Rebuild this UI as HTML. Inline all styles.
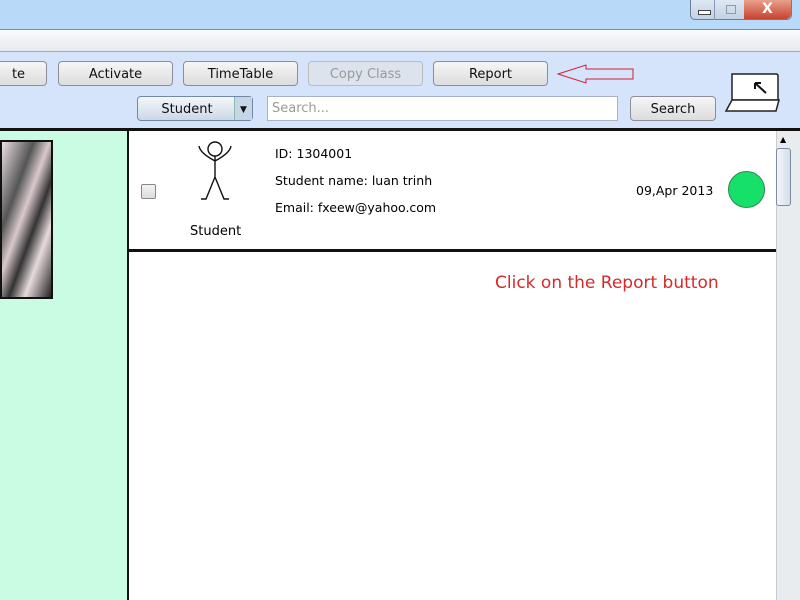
<!DOCTYPE html><html><head><style>
body{margin:0;width:800px;height:600px;overflow:hidden;position:relative;font-family:"Comic Sans MS","DejaVu Sans",sans-serif;background:#fff}
.a{position:absolute}
.btn{position:absolute;height:25px;border:1px solid #8a8f99;border-radius:4px;background:linear-gradient(#f6f6f6,#dcdcdc);font-size:13px;text-align:center;line-height:26px;color:#111;box-sizing:border-box}
</style></head><body>
<div class="a" style="left:0;top:0;width:800px;height:29px;background:#b9d9f9"></div>
<div class="a" style="left:690px;top:0;width:102px;height:20px;border:1px solid #6c7d96;border-top:none;border-radius:0 0 5px 5px;background:linear-gradient(#dfe8f3,#c3d1e3);box-sizing:border-box"></div>
<div class="a" style="left:714px;top:0;width:1px;height:20px;background:#8a9ab0"></div>
<div class="a" style="left:744px;top:0;width:47px;height:19px;background:linear-gradient(#e8a08e,#c7432c);border-radius:0 0 5px 0"></div>
<div class="a" style="left:698px;top:10px;width:11px;height:3px;border:1px solid #444;background:#fff"></div>
<div class="a" style="left:726px;top:5px;width:8px;height:7px;border:1px solid #8a9ab0"></div>
<div class="a" style="left:762px;top:1px;color:#fff;font-size:14px;font-weight:bold;font-family:'DejaVu Sans'">X</div>
<div class="a" style="left:0;top:29px;width:800px;height:23px;background:linear-gradient(#fafbfc,#e6e9ee);border-top:1px solid #7d8ba0;border-bottom:1px solid #a0a8b4;box-sizing:border-box"></div>
<div class="a" style="left:0;top:52px;width:800px;height:76px;background:#d5e3fb"></div>
<div class="btn" style="left:-10px;top:61px;width:57px">te</div>
<div class="btn" style="left:58px;top:61px;width:115px">Activate</div>
<div class="btn" style="left:183px;top:61px;width:115px">TimeTable</div>
<div class="btn" style="left:308px;top:61px;width:115px;color:#999;border-color:#bbb;background:#dde3ec">Copy Class</div>
<div class="btn" style="left:433px;top:61px;width:115px">Report</div>
<svg class="a" style="left:556px;top:63px" width="80" height="22"><path d="M2 11 L30 2 L30 6 L77 6 L77 16 L30 16 L30 20 Z" fill="none" stroke="#d02030" stroke-width="1"/></svg>
<div class="btn" style="left:137px;top:96px;width:116px;height:25px;background:linear-gradient(#f4f7fb,#ccd8e6);border-color:#6f89a6">
<span style="position:absolute;left:0;width:98px">Student</span><span style="position:absolute;right:0;top:0;width:17px;height:23px;border-left:1px solid #8ba;background:#c7d6e6;font-size:9px">▼</span></div>
<div class="a" style="left:267px;top:96px;width:351px;height:25px;background:#fff;border:1px solid #a8b4c4;box-sizing:border-box;font-size:13px;color:#999;line-height:23px;padding-left:4px">Search...</div>
<div class="btn" style="left:630px;top:96px;width:86px">Search</div>
<svg class="a" style="left:724px;top:70px" width="60" height="44"><path d="M8 4 H52 Q54 4 54 6 V30 H8 Z" fill="#fff" stroke="#222" stroke-width="1.5"/><path d="M8 30 L2 41 H52 L55 30 Z" fill="#fff" stroke="#222" stroke-width="1.5"/><path d="M42 23 L31 13 M31 13 L37 13 M31 13 L31 19" fill="none" stroke="#111" stroke-width="2"/></svg>
<div class="a" style="left:0;top:128px;width:800px;height:3px;background:#111"></div>
<div class="a" style="left:0;top:131px;width:127px;height:469px;background:#c9fce3"></div>
<div class="a" style="left:0;top:140px;width:53px;height:159px;background:linear-gradient(110deg,#ece0e3 0,#555 30%,#d9c9cc 45%,#333 60%,#e6dadc 75%,#222);border:2px solid #111;box-sizing:border-box"></div>
<div class="a" style="left:127px;top:131px;width:2px;height:469px;background:#111"></div>
<div class="a" style="left:129px;top:249px;width:647px;height:3px;background:#111"></div>
<div class="a" style="left:776px;top:131px;width:24px;height:469px;background:#e8ecef;border-left:1px solid #ccc;box-sizing:border-box"></div>
<div class="a" style="left:776px;top:148px;width:13px;height:56px;background:linear-gradient(90deg,#f2f5f8,#d4dfea);border:1px solid #7d8ba0;border-radius:3px"></div>
<div class="a" style="left:780px;top:135px;font-size:8px">▲</div>
<div class="a" style="left:141px;top:184px;width:13px;height:13px;border:1px solid #888;border-radius:2px;background:linear-gradient(#f2f2f2,#ddd)"></div>
<svg class="a" style="left:196px;top:139px" width="40" height="66"><circle cx="19" cy="10" r="7" fill="none" stroke="#111" stroke-width="1.4"/><path d="M19 17 V38 M3 7 Q4 14 19 22 Q34 14 35 7 M19 38 L10 60 H5 M19 38 L28 60 H33" fill="none" stroke="#111" stroke-width="1.4"/></svg>
<div class="a" style="left:190px;top:224px;font-size:13px">Student</div>
<div class="a" style="left:275px;top:140px;font-size:12.5px;line-height:27px">ID: 1304001<br>Student name: luan trinh<br>Email: fxeew@yahoo.com</div>
<div class="a" style="left:636px;top:183px;font-size:12.5px;font-family:'DejaVu Sans'">09,Apr 2013</div>
<div class="a" style="left:728px;top:171px;width:35px;height:35px;border-radius:50%;background:#17e06a;border:1px solid #2a8a50"></div>
<div class="a" style="left:495px;top:273px;font-size:17px;color:#d42a2a;font-family:'DejaVu Sans'">Click on the Report button</div>
</body></html>
